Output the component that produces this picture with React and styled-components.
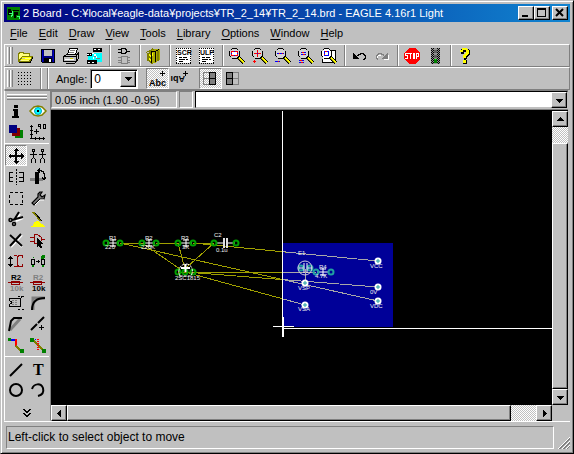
import React, { useState } from 'react';
import styled, { createGlobalStyle, css } from 'styled-components';

const GlobalStyle = createGlobalStyle`
  * {
    box-sizing: border-box;
  }

  body {
    margin: 0;
    background: #c0c0c0;
    font-family: "Liberation Sans", Arial, sans-serif;
    font-size: 11px;
    color: #000;
  }

  button, input, select {
    font: inherit;
    color: inherit;
    border-radius: 0;
    outline: none;
  }
`;

const raised = css`
  background: #c0c0c0;
  border: 1px solid;
  border-color: #fff #000 #000 #fff;
  box-shadow: inset -1px -1px 0 #808080;
`;

const dither = css`
  background: repeating-conic-gradient(#fff 0 25%, #c0c0c0 0 50%) 0 0 / 2px 2px;
`;

const Window = styled.div`
  display: flex;
  flex-direction: column;
  height: 100vh;
  padding: 3px;
  border: 1px solid;
  border-color: #c0c0c0 #000 #000 #c0c0c0;
  box-shadow: inset 1px 1px 0 #fff, inset -1px -1px 0 #808080;
  background: #c0c0c0;
`;

const TitleBar = styled.header`
  display: flex;
  align-items: center;
  height: 18px;
  flex: none;
  padding: 0 2px 0 3px;
  background: linear-gradient(90deg, #000080, #1084d0);
  color: #fff;
`;

const Title = styled.h1`
  flex: 1;
  margin: 0 0 0 3px;
  font-size: 11px;
  font-weight: normal;
  line-height: 18px;
  white-space: nowrap;
  overflow: hidden;
`;

const CaptionButton = styled.button`
  ${raised}
  width: 16px;
  height: 14px;
  padding: 0;
  margin-left: ${(p) => (p.$gap ? 2 : 0)}px;

  svg {
    display: block;
  }
`;

const MenuBar = styled.nav`
  display: flex;
  flex: none;
  gap: 11px;
  height: 22px;
  padding-left: 6px;
  line-height: 22px;
`;

const MenuItem = styled.a`
  color: #000;
  text-decoration: none;

  u {
    text-underline-offset: 2px;
  }
`;

const Toolbar = styled.div`
  display: flex;
  align-items: center;
  flex: none;
  height: 23px;
  border: 1px solid;
  border-color: #fff #808080 #808080 #fff;
  padding-left: 2px;
`;

const Grip = styled.div`
  width: 7px;
  height: 17px;
  flex: none;
  background: linear-gradient(
    90deg,
    #fff 0 1px, #c0c0c0 1px 2px, #808080 2px 3px,
    #fff 3px 4px, #c0c0c0 4px 5px, #808080 5px 6px, #c0c0c0 6px
  );
`;

const Separator = styled.div`
  width: 2px;
  height: 21px;
  margin: 0 2px 0 3px;
  flex: none;
  border-left: 1px solid #808080;
  border-right: 1px solid #fff;
`;

const ToolPair = styled.div`
  display: flex;
  margin-right: 7px;
`;

const ToolButton = styled.button`
  display: flex;
  flex: none;
  width: ${(p) => (p.$narrow ? 22 : 23)}px;
  height: 21px;
  padding: 0;
  border: 1px solid transparent;
  background: none;

  ${(p) => p.$pressed && css`
    ${dither}
    border-color: #808080 #fff #fff #808080;
  `}

  svg {
    display: block;
    overflow: visible;
    flex: none;
  }
`;

const AngleLabel = styled.label`
  margin: 0 3px 0 5px;
`;

const SelectBox = styled.div`
  display: flex;
  width: 48px;
  height: 20px;
  margin-right: 8px;
  border: 1px solid;
  border-color: #808080 #fff #fff #808080;
  box-shadow: inset 1px 1px 0 #000;
  background: #fff;
  position: relative;

  select {
    appearance: none;
    width: 100%;
    border: 0;
    background: transparent;
    padding: 0 0 0 3px;
    font-size: 12px;
    z-index: 1;
  }
`;

const ArrowFace = styled.span`
  ${raised}
  position: absolute;
  right: 1px;
  top: 1px;
  bottom: 1px;
  width: 16px;
  display: grid;
  place-items: center;
`;

const Workspace = styled.div`
  display: flex;
  flex: 1;
  min-height: 0;
  border-bottom: 1px solid #fff;
`;

const Palette = styled.aside`
  width: 47px;
  flex: none;
  padding: 3px 1px 0 0;
  border: 1px solid;
  border-color: #808080 #808080 transparent #fff;
`;

const PaletteGrip = styled.div`
  height: 6px;
  margin: 0 2px;
  background: linear-gradient(
    #fff 0 1px, #c0c0c0 1px 2px, #808080 2px 3px,
    #fff 3px 4px, #c0c0c0 4px 5px, #808080 5px
  );
`;

const PaletteGroup = styled.div`
  display: grid;
  grid-template-columns: 22px 22px;
  padding-bottom: 1px;
  margin-bottom: 1px;
  border-bottom: ${(p) => (p.$last ? 0 : 1)}px solid #fff;
`;

const MoreButton = styled.button`
  display: block;
  margin: 5px auto 0;
  padding: 0;
  border: 0;
  background: none;

  svg {
    display: block;
  }
`;

const Editor = styled.main`
  display: flex;
  flex-direction: column;
  flex: 1;
  min-width: 0;
  padding-right: 2px;
`;

const CommandRow = styled.div`
  display: flex;
  height: 20px;
  flex: none;
  gap: 2px;
  padding-bottom: 1px;
  border-top: 1px solid #808080;
  border-bottom: 1px solid #808080;
`;

const Sunken = styled.div`
  border: 1px solid;
  border-color: #808080 #fff #fff #808080;
`;

const Coordinates = styled(Sunken)`
  width: 126px;
  padding-left: 3px;
  line-height: 16px;
  white-space: nowrap;
  overflow: hidden;
`;

const Spacer = styled(Sunken)`
  width: 14px;
`;

const CommandBox = styled.div`
  display: flex;
  flex: 1;
  min-width: 0;
  border: 1px solid;
  border-color: #000 #c0c0c0 #c0c0c0 #000;
  background: #fff;

  input {
    flex: 1;
    min-width: 0;
    border: 0;
    padding: 0 4px;
    background: #fff;
  }
`;

const FaceButton = styled.button`
  ${raised}
  display: grid;
  place-items: center;
  width: 16px;
  height: 16px;
  flex: none;
  padding: 0;
`;

const View = styled.div`
  display: grid;
  grid-template-columns: 1fr 16px;
  grid-template-rows: 1fr 16px;
  flex: 1;
  min-height: 0;
  border-top: 1px solid #000;
`;

const Canvas = styled.svg`
  display: block;
  width: 100%;
  height: 100%;
  background: #000;
  min-height: 0;
`;

const ScrollTrack = styled.div`
  ${dither}
  display: flex;
  flex-direction: ${(p) => (p.$vertical ? 'column' : 'row')};
  min-height: 0;
`;

const Thumb = styled.div`
  ${raised}
  flex: ${(p) => p.$grow} 0 0;
`;

const TrackGap = styled.div`
  flex: ${(p) => p.$grow} 0 0;
`;

const StatusBar = styled.footer`
  display: flex;
  flex: none;
  align-items: flex-end;
  justify-content: space-between;
  height: 28px;
  padding: 4px 0 1px 2px;
`;

const StatusText = styled(Sunken)`
  flex: 1;
  height: 23px;
  margin-right: 3px;
  padding-left: 1px;
  font-size: 12px;
  line-height: 21px;
`;

const Glyph = ({ children, size = 20, ...rest }) => (
  <svg width={size} height={size} viewBox={`0 0 ${size} ${size}`} fill="none" stroke="#000" shapeRendering="crispEdges" aria-hidden="true" {...rest}>
    {children}
  </svg>
);

const Arrow = ({ dir = 'down' }) => {
  const shapes = {
    down: 'M0 2h7v1h-1v1h-1v1h-1v1h-1v-1h-1v-1h-1v-1h-1z',
    up: 'M3 1h1v1h1v1h1v1h1v1h-7v-1h1v-1h1v-1h1z',
    left: 'M5 0v7h-1v-1h-1v-1h-1v-1h-1v-1h1v-1h1v-1h1v-1z',
    right: 'M2 0v7h1v-1h1v-1h1v-1h1v-1h-1v-1h-1v-1h-1v-1z',
  };
  return <svg width="7" height="7" shapeRendering="crispEdges" aria-hidden="true"><path d={shapes[dir]} /></svg>;
};

const Label = ({ children, ...rest }) => (
  <text fontFamily="Liberation Sans, sans-serif" fontWeight="bold" fill="#000" stroke="none" {...rest}>{children}</text>
);

// Lens shared by the five zoom buttons
const Lens = ({ children }) => (
  <Glyph>
    <path d="M11 11l6 6" strokeWidth="4" />
    <path d="M12 12l5 5" stroke="#ff0" strokeWidth="2" />
    <path d="M11.500 12.500l5 5" stroke="#808000" />
    <path d="M5 2.500h5M3.500 4.500l1 -1M10.500 3.500l1 1M2.500 5v5M12.500 5v5M3.500 10.500l1 1M10.500 11.500l1 -1M5 12.500h5" fill="none" />
    <path d="M5 3h5v1h1v1h1v5h-1v1h-1v1h-5v-1h-1v-1h-1v-5h1v-1h1z" fill="#d4d4d4" stroke="none" />
    {children}
  </Glyph>
);

const icons = {
  open: (
    <Glyph>
      <path d="M3.500 15.500v-8h1v-1h4v1h6v3M3.500 15.500h11l3 -5h-10l-4 5z" fill="#ffff80" stroke="#808000" />
      <path d="M4 16.500h11l3 -5" />
      <path d="M7 11.500h9M6 13.500h9" stroke="#ff0" />
    </Glyph>
  ),
  save: (
    <Glyph>
      <path d="M3.500 3.500h13v13h-12l-1 -1z" fill="#000080" />
      <path d="M6 4h8v6h-8z" fill="#c0c0c0" stroke="none" />
      <path d="M6 12h8v5h-8z" fill="#000" stroke="none" />
      <path d="M11 13h2v3h-2z" fill="#fff" stroke="none" />
      <path d="M15.500 4v12M4.500 4v12" stroke="#0000c0" />
    </Glyph>
  ),
  print: (
    <Glyph>
      <path d="M6.500 8.500l2 -6h8l-2 6" fill="#fff" />
      <path d="M2.500 10.500l3 -2h10l2 -2v6l-3 3h-12z" fill="#c0c0c0" />
      <path d="M9 4.500h5M8 6.500h5" stroke="#808080" />
      <path d="M3 10.500h12v5M15 10l3 -3M4.500 17.500h9l3 -3" />
      <path d="M4 13.500h9" stroke="#fff" />
      <path d="M9 12.500h3" stroke="#cc0" />
    </Glyph>
  ),
  cam: (
    <Glyph>
      <path d="M4 7h14v9h-14z" fill="#0ff" stroke="none" />
      <path d="M9 2h9v4h-9zM3 14h10v4h-10z" fill="#000" stroke="none" />
      <path d="M10 3.500h8M4 16.500h8" stroke="#fff" strokeDasharray="2 2" />
      <path d="M3 7h5v3h-5z" fill="#000" stroke="none" />
      <path d="M3 8.500h4M8 7.500h2M10 8.500l3 3M12 8.500l-3 4" stroke="#fff" strokeDasharray="2 1" />
      <path d="M12 12.500h4M10 10.500h2" stroke="#808080" />
    </Glyph>
  ),
  board: (
    <Glyph>
      <path d="M7.500 2.500h3l2 1v3l-2 1h-3zM4 3.500h3M4 6.500h3M13 5.500h3" />
      <path d="M7.500 10.500h6v7h-6zM4 11.500h3M4 14.500h3M4 16.500h3M14 11.500h2M14 14.500h2M14 16.500h2" stroke="#808080" />
    </Glyph>
  ),
  library: (
    <Glyph>
      <path d="M2.500 6.500l3 -2v11l2 2 4 -2V4l-3 -1z" fill="#808000" stroke="#808000" />
      <path d="M7 5l4 -2 5 0v11l-5 3h-4z" fill="#aaaa00" stroke="none" />
      <path d="M7.500 5v12M11.500 6v10M7 5.500h4l4 -2" />
      <path d="M3.500 7v8M14 5v10" stroke="#808000" strokeWidth="2" />
      <path d="M5 8.500l2 2M5 12.500l2 2M8.500 7v3" stroke="#ff0" />
    </Glyph>
  ),
  scr: (
    <Glyph>
      <path d="M2 2h15v15h-15z" fill="#fff" stroke="none" />
      <path d="M2.500 2v15M16.500 2v15M2 2.500h15M2 17.500h15" strokeDasharray="1 1" />
      <Label x="3" y="9" fontSize="7">SCR</Label>
      <path d="M5 11.500h3M9 11.500h4M5 13.500h6M12 13.500h2M5 15.500h4" />
    </Glyph>
  ),
  ulp: (
    <Glyph>
      <path d="M2 2h15v15h-15z" fill="#fff" stroke="none" />
      <path d="M2.500 2v15M16.500 2v15M2 2.500h15M2 17.500h15" strokeDasharray="1 1" />
      <Label x="3" y="9" fontSize="7">ULP</Label>
      <path d="M5 11.500h3M9 11.500h4M5 13.500h6M12 13.500h2M5 15.500h4" />
    </Glyph>
  ),
  fit: (
    <Lens>
      <path d="M4.500 5.500h6v4h-6z" stroke="#f00" fill="#fff" />
      <path d="M4.500 7v1M10.500 7v1M7 5.500h1M7 9.500h1" stroke="#00f" />
    </Lens>
  ),
  zoomIn: (
    <Lens>
      <path d="M4 7.500h7M7.500 4v7M3 15.500h3M4.500 14v3" stroke="#f00" />
      <path d="M7 7.500h1" stroke="#00f" />
    </Lens>
  ),
  zoomOut: (
    <Lens>
      <path d="M4 7.500h7M2 15.500h5" stroke="#00f" />
      <path d="M6 7.500h1M9 7.500h1M5 15.500h1" stroke="#f00" />
    </Lens>
  ),
  redraw: (
    <Lens>
      <path d="M5 6.500h5M5 8.500h5M3 14.500h5M3 16.500h5" stroke="#00f" />
      <path d="M6 6.500h2M7 8.500h2M4 14.500h2M5 16.500h2" stroke="#f00" />
    </Lens>
  ),
  select: (
    <Glyph>
      <path d="M10 4.500h6.500v12h-13v-4" fill="#fff" />
      <Lens>
        <path d="M5 3h5v1h1v1h1v5h-1v1h-1v1h-5v-1h-1v-1h-1v-5h1v-1h1z" fill="#fff" stroke="none" />
        <path d="M5.500 5.500h4v4h-4z" stroke="#00f" />
        <path d="M6 5.500h2M5.500 8v1" stroke="#f00" />
      </Lens>
    </Glyph>
  ),
  undo: (
    <Glyph>
      <path d="M4 7h1v1h1v1h1v1h1v1h1v1h1v1h-6z" fill="#000" stroke="none" />
      <path d="M8 9.500h1v-1h2v-1h3v1h1v1h1v3h-1v1h-1" />
    </Glyph>
  ),
  redo: (
    <Glyph stroke="#808080">
      <path d="M17 8v6h-6z" fill="#fff" stroke="none" />
      <path d="M16 7h-1v1h-1v1h-1v1h-1v1h-1v1h-1v1h6z" fill="#808080" stroke="none" />
      <path d="M12 9.500h-1v-1h-2v-1h-3v1h-1v1h-1v3h1v1h1" />
      <path d="M6 9.500h3M5.500 10v2" stroke="#fff" />
    </Glyph>
  ),
  stop: (
    <Glyph>
      <path d="M7 2h6l5 5v6l-5 5h-6l-5 -5v-6z" fill="#f00" stroke="none" />
      <path d="M6.500 7.500h-3v2h2v3h-3M7 7.500h3M8.500 7v6M11.500 7.500h1v5h-1zM14.500 13v-5.500h2v3h-2" stroke="#fff" />
    </Glyph>
  ),
  go: (
    <Glyph>
      <path d="M6 2h9v16h-9z" fill="#909090" stroke="none" />
      <path d="M6.500 2v16M8.500 2v16M12.500 2v16M14.500 2v16" strokeDasharray="1 1" />
      <path d="M7.500 3v15M13.500 3v15" strokeDasharray="1 1" />
      <path d="M9 4h3v3h-3zM9 9h3v3h-3z" fill="#606060" stroke="none" />
      <path d="M9 13h3v4h-3z" fill="#008000" stroke="none" />
      <path d="M10 13.500h1" stroke="#0f0" />
    </Glyph>
  ),
  help: (
    <Glyph>
      <path d="M6 3h2v-1h4v1h2v1h1v5h-1v1h-1v1h-1v2h-1v1h1v4h-4v-4h1v-4h1v-1h1v-1h1v-2h-3v2h-3v-3h1z" fill="#000" stroke="none" />
      <path d="M5 4h2v-2h5v1h1v1h1v4h-1v1h-1v1h-1v2h-3v-3h1v-1h1v-1h1v-3h-3v2h-3zM8 14h3v3h-3z" fill="#ff0" stroke="none" />
    </Glyph>
  ),
  grid: (
    <Glyph>
      {[3, 6, 9, 12, 15].map((y) => <path key={y} d={`M3 ${y}.5h14`} strokeDasharray="1 2" />)}
    </Glyph>
  ),
  text: (
    <Glyph>
      <Label x="2" y="17" fontSize="9">Abc</Label>
      <path d="M13 4.500h5M15.500 2v5" />
    </Glyph>
  ),
  mirrored: (
    <Glyph>
      <g transform="rotate(180 8 10)"><Label x="1" y="13" fontSize="9">Abı</Label></g>
      <path d="M13 4.500h5M15.500 2v5" />
    </Glyph>
  ),
  gridRight: (
    <Glyph>
      <path d="M3.500 3.500h6v12h-6zM3 9.500h6" stroke="#808080" />
      <path d="M9.500 3.500h6v12h-6z" fill="#808080" />
      <path d="M9 9.500h7" />
    </Glyph>
  ),
  gridLeft: (
    <Glyph>
      <path d="M9.500 3.500h6v12h-6zM9 9.500h7" stroke="#808080" />
      <path d="M3.500 3.500h6v12h-6z" fill="#808080" />
      <path d="M3 9.500h7" />
    </Glyph>
  ),
  info: (
    <Glyph>
      <path d="M8 4h4v3h-4zM7 8h5v7h1v2h-7v-2h2v-5h-1z" fill="#000" stroke="none" />
    </Glyph>
  ),
  show: (
    <Glyph shapeRendering="auto">
      <path d="M2 10l4 -4 4 -1 4 1 4 4 -4 4 -4 1 -4 -1z" fill="#fff" stroke="#808000" strokeWidth="1.500" />
      <circle cx="10" cy="10" r="3.500" fill="#0ff" stroke="#00a0c0" />
      <path d="M9 9h2v2h-2z" fill="#000" stroke="none" />
    </Glyph>
  ),
  display: (
    <Glyph>
      <path d="M9 8h8v8h-8z" fill="#008000" stroke="none" />
      <path d="M6 6h8v8h-8z" fill="#800000" stroke="none" />
      <path d="M3 3h8v8h-8z" fill="#000080" stroke="none" />
    </Glyph>
  ),
  mark: (
    <Glyph>
      <path d="M3.500 3v14M2 16.500h15M2 4.500h3M2 8.500h3M2 12.500h3M7.500 15v3M11.500 15v3M15.500 15v3" />
      <path d="M10.500 2.500h2v2h-2zM12.500 4v3M15.500 2.500h2v4h-2zM6 9.500h5M8.500 7v5" />
    </Glyph>
  ),
  move: (
    <Glyph>
      <path d="M10 2l-3 3h6zM10 18l-3 -3h6zM2 10l3 -3v6zM18 10l-3 -3v6z" fill="#000" stroke="none" />
      <path d="M10 4v12M4 10h12" strokeWidth="2" />
    </Glyph>
  ),
  copy: (
    <Glyph>
      <path d="M4.500 3.500h2v2h-2zM13.500 3.500h2v2h-2zM5.500 6v6M14.500 6v6M2 8.500h7M11 8.500h7M5.500 11.500l-2 2v3M5.500 11.500l2 2v3M14.500 11.500l-2 2v3M14.500 11.500l2 2v3" />
    </Glyph>
  ),
  mirror: (
    <Glyph>
      <path d="M7 5.500h-4v9h4M3 10.500h4M13 5.500h4v9h-4M17 10.500h-4" />
      <path d="M10 2v16" strokeDasharray="2 1" />
    </Glyph>
  ),
  rotate: (
    <Glyph>
      <path d="M2 11h13v3h-13z" fill="#808080" stroke="none" />
      <path d="M7 5h4v12h-4z" fill="#000" stroke="none" />
      <path d="M9 3.500h4v1h2v2h1v5M10 3.500l2 -2M10 3.500l2 2M14 10.500l2 2 2 -2" />
    </Glyph>
  ),
  group: (
    <Glyph>
      <path d="M3.500 4.500h13v12h-13z" strokeDasharray="3 2" />
    </Glyph>
  ),
  change: (
    <Glyph shapeRendering="auto">
      <path d="M12 4l-2 2v3l-6 6 2 2 6 -6h4l1 -4 -3 2 -2 -2 2 -3z" fill="#808080" strokeWidth="1.200" />
      <path d="M7 17l5 -5h4" stroke="#fff" />
    </Glyph>
  ),
  cut: (
    <Glyph shapeRendering="auto">
      <path d="M14 5l-4 6M17 9l-7 3" stroke="#fff" strokeWidth="2" />
      <path d="M13 3l-5 8M17 8l-11 3" strokeWidth="2" />
      <circle cx="4.500" cy="11" r="1.500" strokeWidth="1.500" />
      <circle cx="8" cy="15" r="1.500" strokeWidth="1.500" />
    </Glyph>
  ),
  paste: (
    <Glyph>
      <path d="M5 3l8 9" stroke="#808000" strokeWidth="2" />
      <path d="M7 4l7 8" />
      <path d="M6 13l4 -1 7 5v1h-14v-1h2z" fill="#ff0" stroke="none" />
    </Glyph>
  ),
  remove: (
    <Glyph shapeRendering="auto">
      <path d="M5 6l11 11M16 5l-11 12" stroke="#fff" strokeWidth="2" />
      <path d="M4 5l12 11M15 4l-11 12" strokeWidth="2" />
    </Glyph>
  ),
  add: (
    <Glyph>
      <path d="M6.500 4.500h3l4 3v3l-3 3h-4zM2 7.500h4M2 11.500h4M13 9.500h4" stroke="#900000" />
      <path d="M9 8l7 6h-3l1 4 -2 0 -1 -3 -2 2z" fill="#000" stroke="none" />
    </Glyph>
  ),
  pinswap: (
    <Glyph>
      <path d="M4.500 5v11M3 6.500h3M2 7.500h5M2 13.500h5M3 14.500h3" />
      <path d="M8 4.500h3M17 4.500h-4l-2 2v7l2 2h4M8 15.500h4M16.500 5v2M16.500 13v2" stroke="#900000" />
    </Glyph>
  ),
  gateswap: (
    <Glyph>
      <path d="M3.500 8.500h3v5h-3zM13.500 8.500h3v5h-3zM8 10.500h4M10.500 9v3" />
      <path d="M4.500 14v2M14.500 14v2" stroke="#008000" strokeWidth="2" />
      <circle cx="15" cy="6" r="2" fill="#008000" stroke="none" />
      <path d="M5 6.500h1" stroke="#008000" />
    </Glyph>
  ),
  name: (
    <Glyph>
      <Label x="5" y="8" fontSize="8">R2</Label>
      <path d="M2 10.500h15M5.500 9.500h8v3h-8z" stroke="#900000" />
      <Label x="4" y="19" fontSize="8" fill="#808080">10k</Label>
    </Glyph>
  ),
  value: (
    <Glyph>
      <Label x="5" y="8" fontSize="8" fill="#808080">R2</Label>
      <path d="M2 10.500h15M5.500 9.500h8v3h-8z" stroke="#900000" />
      <Label x="4" y="19" fontSize="8">10k</Label>
    </Glyph>
  ),
  smash: (
    <Glyph>
      <path d="M14 5.500h-11v2l2 1v2l-2 1v2h11zM12 3.500h2M16 3.500h2M15.500 3v2M12 16.500h2M16 16.500h2" />
      <path d="M6 7.500h6M6 9.500h6M6 11.500h6" stroke="#808080" strokeDasharray="2 1" />
    </Glyph>
  ),
  miter: (
    <Glyph shapeRendering="auto">
      <path d="M5 17V5h12" stroke="#808080" strokeWidth="3" />
      <path d="M4 17c0 -8 5 -12 13 -12" strokeWidth="2" />
    </Glyph>
  ),
  split: (
    <Glyph shapeRendering="auto">
      <path d="M4 16l10 -11" stroke="#808080" strokeWidth="3" />
      <path d="M3 17l2 -10 3 -3h8" strokeWidth="2" />
    </Glyph>
  ),
  optimize: (
    <Glyph shapeRendering="auto">
      <path d="M3 16l6 -6M10 9l6 -6" strokeWidth="2" />
      <path d="M11 13.500h5M13.500 11v5" />
    </Glyph>
  ),
  route: (
    <Glyph>
      <path d="M4 4.500h6" stroke="#00f" strokeWidth="2" />
      <path d="M10 4v7" stroke="#f00" strokeWidth="2" />
      <path d="M10 11l6 6" stroke="#808000" strokeWidth="2" />
      <path d="M2 3h3v3h-3zM14 14h4v4h-4z" fill="#008000" stroke="none" />
    </Glyph>
  ),
  ripup: (
    <Glyph>
      <path d="M4 4l12 12" stroke="#808000" strokeWidth="2" />
      <path d="M5 4.500h6" stroke="#00f" strokeDasharray="1 1" />
      <path d="M10 4v11" stroke="#f00" strokeWidth="2" strokeDasharray="1 1" />
      <path d="M2 3h4v4h-4zM14 14h4v4h-4z" fill="#008000" stroke="none" />
    </Glyph>
  ),
  wire: (
    <Glyph shapeRendering="auto">
      <path d="M4 17L16 5" strokeWidth="2" />
    </Glyph>
  ),
  label: (
    <Glyph>
      <text x="5" y="16" fontFamily="Liberation Serif, serif" fontWeight="bold" fontSize="16" fill="#000" stroke="none">T</text>
    </Glyph>
  ),
  circle: (
    <Glyph shapeRendering="auto">
      <circle cx="10" cy="10" r="6" strokeWidth="2" />
    </Glyph>
  ),
  arc: (
    <Glyph shapeRendering="auto">
      <path d="M4 9c2 -6 9 -6 11 -1 1 4 -1 7 -5 8" strokeWidth="2" />
    </Glyph>
  ),
};

const toolbarGroups = [
  ['open', 'save', 'print', 'cam'],
  ['board'],
  ['library'],
  ['scr', 'ulp'],
  ['fit', 'zoomIn', 'zoomOut', 'redraw', 'select'],
  ['undo', 'redo'],
  ['stop', 'go'],
  ['help'],
];

const paletteGroups = [
  ['info', 'show', 'display', 'mark'],
  [
    'move', 'copy', 'mirror', 'rotate', 'group', 'change', 'cut', 'paste', 'remove', 'add',
    'pinswap', 'gateswap', 'name', 'value', 'smash', 'miter', 'split', 'optimize', 'route', 'ripup',
  ],
  ['wire', 'label', 'circle', 'arc'],
];

const menus = ['File', 'Edit', 'Draw', 'View', 'Tools', 'Library', 'Options', 'Window', 'Help'];

// Unrouted connections, in canvas units
const airwires = 'M69 132h22M105 132h22M142 132h21M142 132L327 150M69 132L327 190M91 132L129 158'
  + 'M127 132L134 158M163 132L136 156M127 161H265M134 161L327 176M134 161L254 194M254 158V172';

const padPairs = [[55, 69], [91, 105], [127, 142]];

const silkLabels = [
  ['R1', 58, 129], ['220', 54, 138], ['R2', 94, 129], ['220K', 90, 138],
  ['R3', 130, 129], ['3K', 131, 138], ['C2', 163, 126], ['0.1u', 165, 141],
  ['2SC1815', 124, 169], ['E1', 247, 144], ['R4', 268, 158], ['4.7K', 264, 167],
  ['VSP', 247, 179], ['VSA', 247, 200], ['VCC', 319, 157], ['0V', 319, 183], ['VDC', 319, 197],
];

const Pad = ({ x, y, color = '#00a000' }) => (
  <circle cx={x} cy={y} r="2.500" fill="none" stroke={color} strokeWidth="2" />
);

const Terminal = ({ x, y }) => (
  <g>
    <circle cx={x} cy={y} r="3.500" fill="#fff" />
    <path d={`M${x - 2} ${y}h4M${x} ${y - 2}v4`} stroke="#20a0a0" />
  </g>
);

const Body = ({ x, y }) => (
  <path d={`M${x - 6} ${y}h12M${x - 3} ${y - 3}h6M${x - 3} ${y + 3}h6M${x} ${y - 4}v8`} stroke="#fff" />
);

const Board = () => (
  <Canvas role="img" aria-label="Board layout">
    <defs>
      <clipPath id="board-area"><rect x="232" y="132" width="110" height="84" /></clipPath>
    </defs>
    <rect x="232" y="132" width="110" height="84" fill="#000098" />
    <g fill="none" shapeRendering="crispEdges">
      <path d={airwires} stroke="#a0a000" />
      <path d={airwires} stroke="#a8a8a8" clipPath="url(#board-area)" />
      <path d="M231.500 0v226M222 215.500h21M231 217.500h2000" stroke="#fff" />
      <path d="M232.500 206v20" stroke="#fff" />
    </g>
    {padPairs.map(([a, b]) => (
      <g key={a}>
        <Body x={Math.round((a + b) / 2)} y={132} />
        <Pad x={a} y={132} />
        <Pad x={b} y={132} />
      </g>
    ))}
    <path d="M166 132h6M177 132h7" stroke="#fff" />
    <path d="M173 127v10M176 127v10" stroke="#e0e0e0" strokeWidth="2" />
    <Pad x={163} y={132} />
    <Pad x={185} y={132} />
    <Pad x={127} y={161} />
    <Pad x={134} y={161} />
    <Pad x={142} y={161} />
    <path d="M129 165c-3 -5 0 -12 6 -12s8 7 5 12z" fill="none" stroke="#fff" strokeDasharray="3 1" />
    <path d="M130 157h9M134.500 153v8" stroke="#fff" strokeWidth="2" />
    <Pad x={250} y={157} color="#20a0a0" />
    <Pad x={259} y={157} color="#20a0a0" />
    <circle cx="254" cy="157" r="7" fill="none" stroke="#d0d0e0" />
    <path d="M253 152v10M256 152v10M248 157h4M257 157h4" stroke="#fff" />
    <Body x={272} y={161} />
    <Pad x={265} y={161} color="#20a0a0" />
    <Pad x={280} y={161} color="#20a0a0" />
    <Terminal x={254} y={172} />
    <Terminal x={254} y={194} />
    <Terminal x={327} y={150} />
    <Terminal x={327} y={176} />
    <Terminal x={327} y={190} />
    <g fill="#f0f0f0" fontFamily="Liberation Sans, sans-serif" fontSize="6">
      {silkLabels.map(([name, x, y]) => <text key={name} x={x} y={y}>{name}</text>)}
    </g>
  </Canvas>
);

const App = () => {
  const [angle, setAngle] = useState('0');
  const [command, setCommand] = useState('');
  const [tool, setTool] = useState('move');

  return (
    <>
      <GlobalStyle />
      <Window>
        <TitleBar>
          <svg width="13" height="13" shapeRendering="crispEdges" aria-hidden="true">
            <path d="M0 0h13v13h-13z" fill="#008000" />
            <path d="M1 2h3v2h2v2h-2v2h-3zM6 3h6v1h-6zM7 5h4v3h-2v3h-2z" fill="#000" />
            <path d="M2 6.500h3v-3M4 9.500l2 -2M10 9.500h2v2" stroke="#40ff80" fill="none" />
          </svg>
          <Title>2 Board - C:¥local¥eagle-data¥projects¥TR_2_14¥TR_2_14.brd - EAGLE 4.16r1 Light</Title>
          <CaptionButton aria-label="Minimize">
            <svg width="14" height="12"><path d="M3 8h6v2h-6z" /></svg>
          </CaptionButton>
          <CaptionButton aria-label="Maximize">
            <svg width="14" height="12" shapeRendering="crispEdges"><path d="M2 1h9v9h-9zM3 3v6h7v-6z" fillRule="evenodd" /></svg>
          </CaptionButton>
          <CaptionButton aria-label="Close" $gap>
            <svg width="14" height="12"><path d="M3 2l7 7M10 2l-7 7" stroke="#000" strokeWidth="2" /></svg>
          </CaptionButton>
        </TitleBar>

        <MenuBar>
          {menus.map((name) => (
            <MenuItem key={name} href="#"><u>{name[0]}</u>{name.slice(1)}</MenuItem>
          ))}
        </MenuBar>

        <Toolbar>
          <Grip />
          {toolbarGroups.map((group, i) => (
            <React.Fragment key={group[0]}>
              {i > 0 && <Separator />}
              {group.map((id) => (
                <ToolButton key={id} aria-label={id}>{icons[id]}</ToolButton>
              ))}
            </React.Fragment>
          ))}
        </Toolbar>

        <Toolbar>
          <Grip />
          <ToolButton aria-label="grid">{icons.grid}</ToolButton>
          <Separator />
          <Separator />
          <AngleLabel htmlFor="angle">Angle:</AngleLabel>
          <SelectBox>
            <select id="angle" value={angle} onChange={(e) => setAngle(e.target.value)}>
              <option>0</option>
              <option>90</option>
              <option>180</option>
              <option>270</option>
            </select>
            <ArrowFace><Arrow /></ArrowFace>
          </SelectBox>
          <ToolPair>
            <ToolButton aria-label="text" $pressed>{icons.text}</ToolButton>
            <ToolButton aria-label="mirrored">{icons.mirrored}</ToolButton>
          </ToolPair>
          <ToolPair>
            <ToolButton aria-label="right" $pressed>{icons.gridRight}</ToolButton>
            <ToolButton aria-label="left">{icons.gridLeft}</ToolButton>
          </ToolPair>
        </Toolbar>

        <Workspace>
          <Palette>
            <PaletteGrip />
            {paletteGroups.map((group, i) => (
              <PaletteGroup key={group[0]} $last={i === 2}>
                {group.map((id) => (
                  <ToolButton key={id} aria-label={id} $narrow $pressed={tool === id} onClick={() => setTool(id)}>
                    {icons[id]}
                  </ToolButton>
                ))}
              </PaletteGroup>
            ))}
            <MoreButton aria-label="more">
              <Glyph size={14}><path d="M3 3.500h2M9 3.500h2M4 4.500h2M8 4.500h2M5 5.500h4M6 6.500h2M3 7.500h2M9 7.500h2M4 8.500h2M8 8.500h2M5 9.500h4M6 10.500h2" /></Glyph>
            </MoreButton>
          </Palette>

          <Editor>
            <CommandRow>
              <Coordinates>0.05 inch (1.90 -0.95)</Coordinates>
              <Spacer />
              <CommandBox>
                <input aria-label="Command" value={command} onChange={(e) => setCommand(e.target.value)} />
                <FaceButton aria-label="History"><Arrow /></FaceButton>
              </CommandBox>
            </CommandRow>
            <View>
              <Board />
              <ScrollTrack $vertical>
                <FaceButton aria-label="Scroll up"><Arrow dir="up" /></FaceButton>
                <TrackGap $grow={1} />
                <Thumb $grow={15} />
                <FaceButton aria-label="Scroll down"><Arrow /></FaceButton>
              </ScrollTrack>
              <ScrollTrack>
                <FaceButton aria-label="Scroll left"><Arrow dir="left" /></FaceButton>
                <Thumb $grow={18} />
                <TrackGap $grow={1} />
                <FaceButton aria-label="Scroll right"><Arrow dir="right" /></FaceButton>
              </ScrollTrack>
            </View>
          </Editor>
        </Workspace>

        <StatusBar>
          <StatusText>Left-click to select object to move</StatusText>
          <svg width="13" height="13" aria-hidden="true">
            <path d="M1 13L13 1M5 13l8 -8M9 13l4 -4" stroke="#fff" />
            <path d="M2 13L13 2M3 13L13 3M6 13l7 -7M7 13l6 -6M10 13l3 -3" stroke="#808080" />
          </svg>
        </StatusBar>
      </Window>
    </>
  );
};

export default App;
